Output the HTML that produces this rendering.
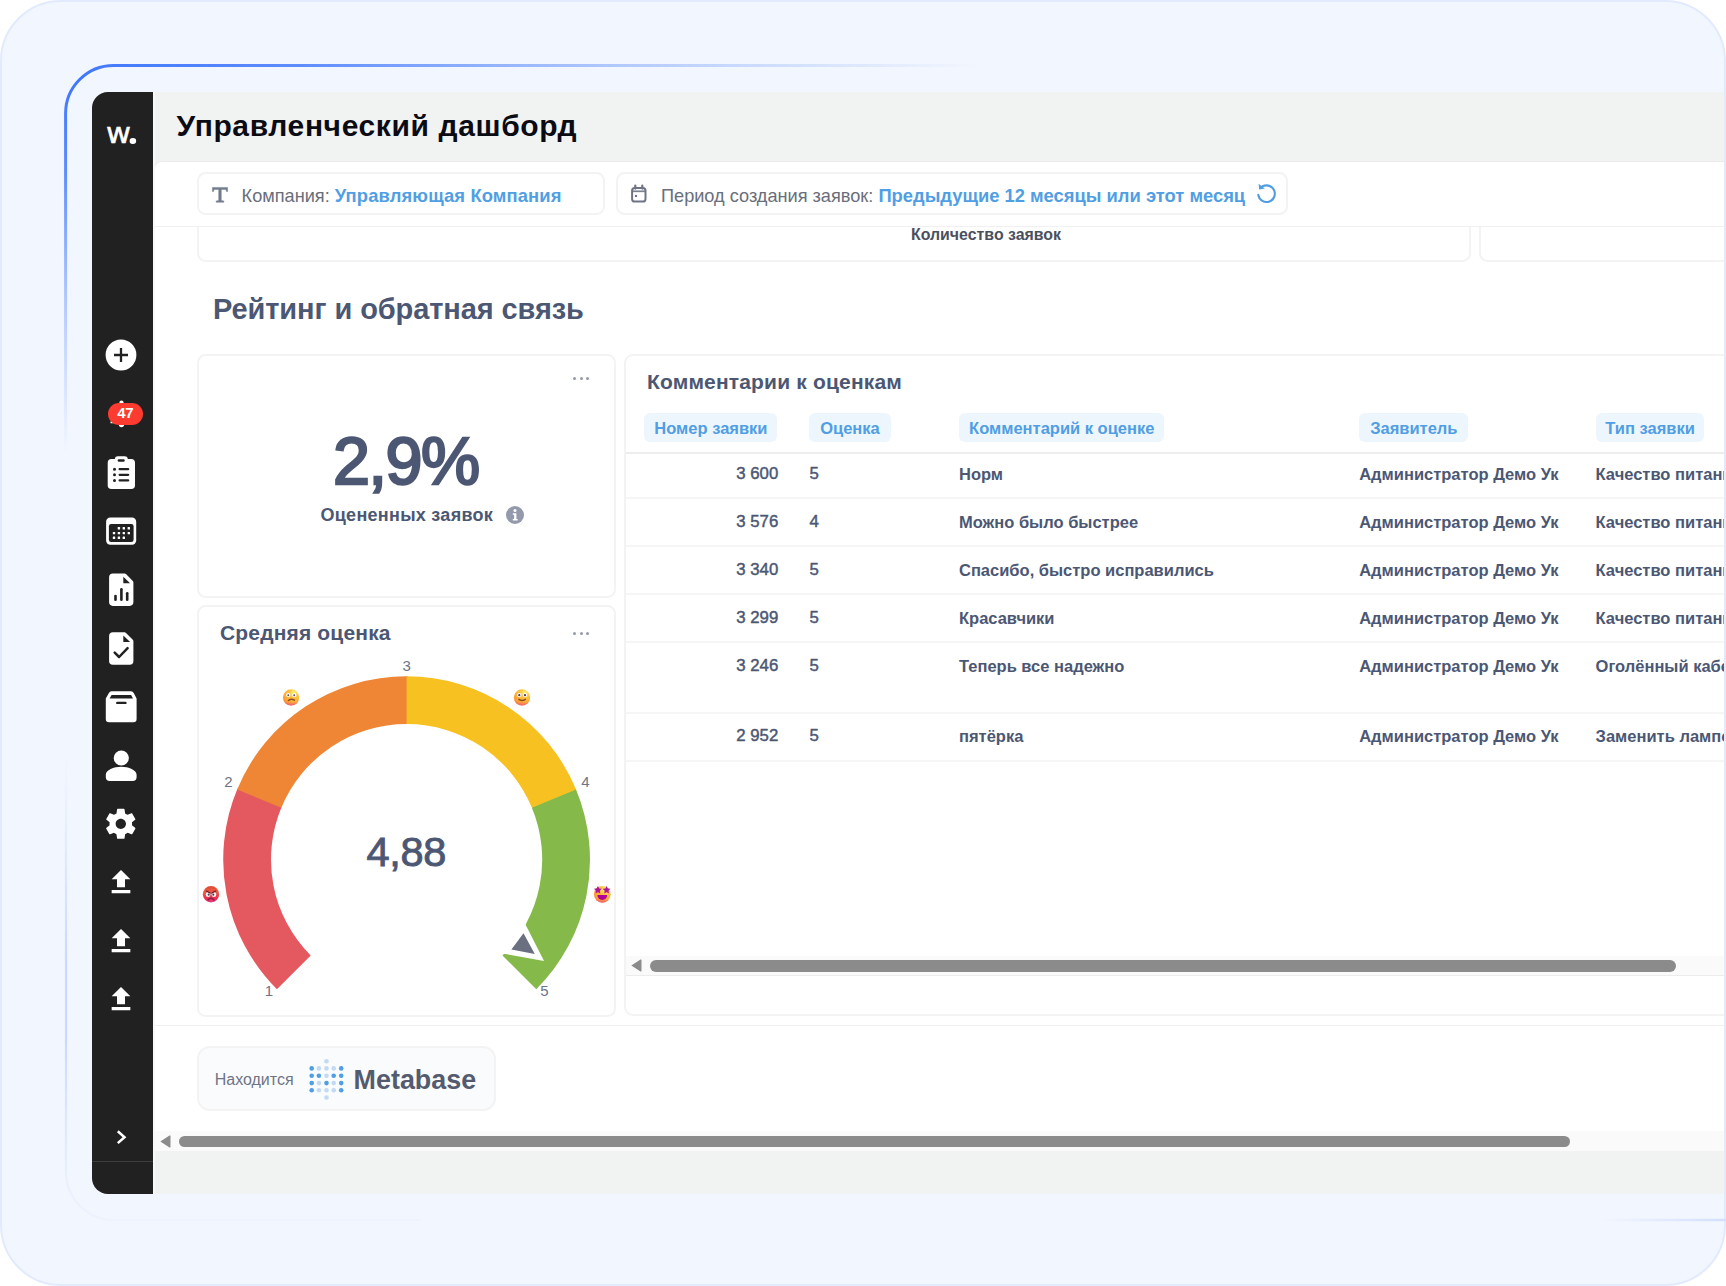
<!DOCTYPE html>
<html lang="ru">
<head>
<meta charset="utf-8">
<title>Управленческий дашборд</title>
<style>
*{box-sizing:border-box;margin:0;padding:0}
html,body{width:1726px;height:1286px;overflow:hidden;background:#fff;font-family:"Liberation Sans",sans-serif}
#outer{position:absolute;left:0;top:0;width:1726px;height:1286px;border:2px solid #e2eafd;border-radius:61px;background:#f2f6fe;overflow:hidden}
#frame{position:absolute;left:0;top:0;width:1726px;height:1286px;pointer-events:none}
#app{position:absolute;left:92px;top:92px;width:1632px;height:1102px;background:#f1f2f2;border-radius:16px 0 0 16px;overflow:hidden}
#side{position:absolute;left:0;top:0;width:61.5px;height:1102px;background:#212121}
#side .logo{position:absolute;left:14.4px;top:24.4px;color:#fff;font-family:"DejaVu Sans","Liberation Sans",sans-serif;font-size:28.4px;line-height:36px;-webkit-text-stroke:.5px #fff;white-space:nowrap;transform:scaleX(1.075);transform-origin:0 0}
#side .logo span{display:inline-block;width:5.6px;height:5.6px;border-radius:50%;background:#fff;color:#fff;font-size:5px;line-height:5.6px;overflow:hidden;-webkit-text-stroke:0;margin-left:-.9px;vertical-align:baseline;position:relative;top:.3px}
#side svg{position:absolute;fill:#fff}
#side .sep{position:absolute;left:0;top:1069px;width:61px;height:1px;background:#3d3d3d}
.badge{position:absolute;left:15.7px;top:311px;width:35.2px;height:22.2px;border-radius:11.1px;background:#fd3b30;color:#fff;font-size:15px;font-weight:bold;text-align:center;line-height:19.6px;letter-spacing:-.2px}
#title{position:absolute;left:84.5px;top:13.6px;font-size:30px;letter-spacing:.62px;font-weight:bold;color:#0b0b14;white-space:nowrap;line-height:40px}
#main{position:absolute;left:62.6px;top:69.6px;width:1569.4px;height:989.9px;background:#fff;border-radius:7px 0 0 0;overflow:hidden;box-shadow:0 -1px 0 #ebebeb}
.abs{position:absolute;white-space:nowrap}
.card{position:absolute;background:#fff;border:2px solid #f3f3f3;border-radius:8.5px}
.pill{position:absolute;top:10.9px;height:43px;border:2px solid #f3f3f3;border-radius:8.5px;background:#fff;white-space:nowrap;font-size:18.17px;line-height:39px;color:#696e7b}
.pill b{color:#509ee3;font-size:18.38px}
.pill svg{position:absolute}
.dark{color:#4c5773}
.hline{position:absolute;height:1.5px;background:#f0f0f0}
.th{position:absolute;top:0;height:29.5px;border-radius:6px;background:#eef6fd;color:#509ee3;font-weight:bold;font-size:16.5px;line-height:30px;white-space:nowrap;text-align:center}
.td{position:absolute;font-weight:bold;font-size:16.5px;color:#4c5773;white-space:nowrap;line-height:20px}
.td.lt{font-weight:normal;-webkit-text-stroke:.45px #4c5773;font-size:16.8px}
.dots{position:absolute;width:17px;height:4px}
.dots i{position:absolute;top:0;width:3px;height:3px;border-radius:50%;background:#949aab}
.glab{font-size:15px;fill:#6e7486;font-family:"Liberation Sans",sans-serif}
</style>
</head>
<body>
<div id="outer"></div>
<svg id="frame" viewBox="0 0 1726 1286"><defs><radialGradient id="g1" gradientUnits="userSpaceOnUse" cx="0" cy="0" r="1" gradientTransform="translate(80 80) scale(900 372)"><stop offset="0" stop-color="#3f76fb"/><stop offset="0.25" stop-color="#4a7efb" stop-opacity=".88"/><stop offset="0.6" stop-color="#5a8bfb" stop-opacity=".42"/><stop offset="1" stop-color="#6a98fb" stop-opacity="0"/></radialGradient><linearGradient id="g2" gradientUnits="userSpaceOnUse" x1="0" y1="757" x2="0" y2="1220"><stop offset="0" stop-color="#c5d6fb" stop-opacity="0"/><stop offset="0.2" stop-color="#c5d6fb" stop-opacity=".35"/><stop offset="0.44" stop-color="#c5d6fb" stop-opacity=".9"/><stop offset="0.61" stop-color="#c5d6fb" stop-opacity=".9"/><stop offset="0.78" stop-color="#c5d6fb" stop-opacity=".45"/><stop offset="0.9" stop-color="#c5d6fb" stop-opacity=".22"/><stop offset="1" stop-color="#c5d6fb" stop-opacity=".1"/></linearGradient><linearGradient id="g3" gradientUnits="userSpaceOnUse" x1="1600" y1="0" x2="1726" y2="0"><stop offset="0" stop-color="#d3dffc" stop-opacity="0"/><stop offset="1" stop-color="#d3dffc" stop-opacity="1"/></linearGradient></defs><path d="M1800 65.400H113.600a48 48 0 0 0-48 48V1172a48 48 0 0 0 48 48H1800" fill="none" stroke="url(#g1)" stroke-width="3"/><path d="M66 750V1172a48 48 0 0 0 48 48H420" fill="none" stroke="url(#g2)" stroke-width="2.200"/><path d="M1600 1220H1726" fill="none" stroke="url(#g3)" stroke-width="2.400"/></svg>
<div id="app">
<div id="side"><div class="logo">w<span>.</span></div><svg style="left:8px;top:243px" width="42" height="40" viewBox="100 335 42 40"><circle cx="121" cy="355" r="15.400"/><path d="M114 355h14M121 348v14" stroke="#212121" stroke-width="2.300" fill="none"/></svg><svg style="left:12.50px;top:305.00px" width="33" height="33" viewBox="0 0 24 24"><path d="M12 22c1.1 0 2-.9 2-2h-4c0 1.1.89 2 2 2zm6-6v-5c0-3.07-1.64-5.64-4.5-6.32V4c0-.83-.67-1.5-1.5-1.5s-1.5.67-1.5 1.5v.68C7.63 5.36 6 7.92 6 11v5l-2 2v1h16v-1l-2-2z"/></svg><div class="badge">47</div><svg style="left:8px;top:358px" width="42" height="45" viewBox="100 450 42 45"><rect x="107.700" y="459.100" width="27.300" height="29.900" rx="3.800"/><rect x="114.800" y="456.300" width="13" height="8" rx="3.200"/><g fill="#212121"><rect x="117.700" y="459.300" width="7" height="2.400" rx="1.200"/><circle cx="114.500" cy="469.2" r="1.500"/><rect x="118.500" y="468.05" width="10.800" height="2.300" rx="1.150"/><circle cx="114.500" cy="474.8" r="1.500"/><rect x="118.500" y="473.65" width="10.800" height="2.300" rx="1.150"/><circle cx="114.500" cy="480.4" r="1.500"/><rect x="118.500" y="479.25" width="10.800" height="2.300" rx="1.150"/></g></svg><svg style="left:8px;top:418px" width="42" height="40" viewBox="100 510 42 40"><rect x="106.100" y="517.500" width="30.100" height="27.300" rx="4.200"/><rect x="108.900" y="524" width="24.700" height="18" rx="2.300" fill="#212121"/><rect x="117.70" y="527.00" width="2.400" height="2.400" rx=".5"/><rect x="122.60" y="527.00" width="2.400" height="2.400" rx=".5"/><rect x="127.60" y="527.00" width="2.400" height="2.400" rx=".5"/><rect x="112.80" y="531.90" width="2.400" height="2.400" rx=".5"/><rect x="117.70" y="531.90" width="2.400" height="2.400" rx=".5"/><rect x="122.60" y="531.90" width="2.400" height="2.400" rx=".5"/><rect x="127.60" y="531.90" width="2.400" height="2.400" rx=".5"/><rect x="112.80" y="536.60" width="2.400" height="2.400" rx=".5"/><rect x="117.70" y="536.60" width="2.400" height="2.400" rx=".5"/><rect x="122.60" y="536.60" width="2.400" height="2.400" rx=".5"/></svg><svg style="left:8px;top:476px" width="42" height="44" viewBox="100 568 42 44"><path d="M112.89999999999999 573.5H124.6a2 2 0 0 1 1.400 .600L132.8 580.9a2 2 0 0 1 .600 1.400V602.1a3.800 3.800 0 0 1-3.800 3.800H112.89999999999999a3.800 3.800 0 0 1-3.800-3.800V577.3a3.800 3.800 0 0 1 3.800-3.800z"/><path d="M123.300 576.8V583.2H130.100z" fill="#212121"/><g fill="#212121"><rect x="114.200" y="594.700" width="2.600" height="6.300" rx="1.300"/><rect x="120.100" y="588" width="2.600" height="13" rx="1.300"/><rect x="125.900" y="591.900" width="2.600" height="9.100" rx="1.300"/></g></svg><svg style="left:8px;top:535px" width="42" height="44" viewBox="100 627 42 44"><path d="M112.89999999999999 632.3H124.6a2 2 0 0 1 1.400 .600L132.8 639.6999999999999a2 2 0 0 1 .600 1.400V660.9a3.800 3.800 0 0 1-3.800 3.800H112.89999999999999a3.800 3.800 0 0 1-3.800-3.800V636.0999999999999a3.800 3.800 0 0 1 3.800-3.800z"/><path d="M123.300 635.5999999999999V642.0H130.100z" fill="#212121"/><path d="M114.700 652.600L119.100 657L127.600 648.200" fill="none" stroke="#212121" stroke-width="2.500" stroke-linecap="round" stroke-linejoin="round"/></svg><svg style="left:8px;top:594px" width="42" height="42" viewBox="100 686 42 42"><path d="M111.600 691.200H131a3 3 0 0 1 2.700 1.700L136.600 698.600V719a3.200 3.200 0 0 1-3.200 3.200H109a3.200 3.200 0 0 1-3.200-3.200V698.600L108.900 692.900A3 3 0 0 1 111.600 691.200z"/><g fill="#212121"><path d="M111.600 694.900H131.100L133 698.500H109.600z"/><rect x="116.100" y="701.700" width="10.500" height="2.400" rx="1.200"/></g></svg><svg style="left:8px;top:653px" width="42" height="42" viewBox="100 745 42 42"><circle cx="121.300" cy="758" r="7.600"/><path d="M121.200 766.800c-7.500 0-15.400 3.300-15.400 8v2.200a4 4 0 0 0 4 4h22.800a4 4 0 0 0 4-4v-2.200c0-4.700-7.900-8-15.400-8z"/></svg><svg style="left:10.40px;top:713.10px" width="37.6" height="37.6" viewBox="0 0 24 24"><path d="M19.140 12.940c.040-.3.060-.61.060-.94 0-.32-.02-.64-.07-.94l2.030-1.580c.18-.14.23-.41.120-.61l-1.920-3.320c-.12-.22-.37-.29-.59-.22l-2.390.96c-.5-.38-1.030-.7-1.620-.94l-.36-2.540c-.04-.24-.24-.41-.48-.41h-3.840c-.24 0-.43.170-.47.410l-.36 2.540c-.59.240-1.130.57-1.620.94l-2.390-.96c-.22-.08-.47 0-.59.220L2.740 8.870c-.12.210-.08.470.120.610l2.030 1.580c-.05.300-.09.630-.09.940s.02.640.07.940l-2.030 1.580c-.18.140-.23.410-.12.610l1.920 3.320c.12.220.37.290.59.220l2.390-.96c.5.380 1.030.7 1.620.94l.36 2.540c.05.240.24.410.48.410h3.840c.24 0 .44-.17.470-.41l.36-2.540c.59-.24 1.130-.56 1.620-.94l2.390.96c.22.080.47 0 .59-.22l1.920-3.320c.12-.22.070-.47-.12-.61l-2.010-1.580zM12 15.300c-1.820 0-3.300-1.480-3.300-3.300s1.480-3.300 3.300-3.300 3.300 1.480 3.300 3.300-1.480 3.300-3.300 3.300z"/></svg><svg style="left:13.30px;top:774.20px" width="32" height="32" viewBox="0 0 24 24"><path d="M9 16h6v-6h4l-7-7-7 7h4zm-4 2h14v2.400H5z"/></svg><svg style="left:13.30px;top:832.60px" width="32" height="32" viewBox="0 0 24 24"><path d="M9 16h6v-6h4l-7-7-7 7h4zm-4 2h14v2.400H5z"/></svg><svg style="left:13.30px;top:890.90px" width="32" height="32" viewBox="0 0 24 24"><path d="M9 16h6v-6h4l-7-7-7 7h4zm-4 2h14v2.400H5z"/></svg><svg style="left:18px;top:1033px" width="24" height="25" viewBox="110 1125 24 25"><path d="M117.800 1131.300L124.500 1137.200L117.800 1143.100" fill="none" stroke="#fff" stroke-width="2.500"/></svg><div class="sep"></div></div>
<div style="position:absolute;left:61.300px;top:0;width:1.600px;height:1102px;background:#f8f8f8"></div>
<div id="title">Управленческий дашборд</div>
<div id="main"><div class="hline" style="left:0;top:64.4px;width:1570px"></div><div class="card" style="left:42.30000000000001px;top:38.400000000000006px;width:1274.400px;height:62px"></div><div class="card" style="left:1324.6000000000001px;top:38.400000000000006px;width:300px;height:62px"></div><div class="abs" style="left:0;top:0;width:1570px;height:64.4px;background:#fff"></div><div class="hline" style="left:0;top:64.4px;width:1570px"></div><div class="abs dark" id="kz" style="left:756.4px;top:64.4px;font-size:15.9px;font-weight:bold;line-height:18px;color:#4a4f5e">Количество заявок</div><div class="pill" style="left:42.30000000000001px;width:408.300px"><svg style="left:11.200px;top:10.900px" width="20" height="20" viewBox="210 185.800 20 20"><path d="M212.400 188.200H227.600V192.300H226.500L225.900 190.200H221.300V201.200L223.800 201.700V203.100H216.200V201.700L218.700 201.200V190.200H214.100L213.500 192.300H212.400Z" fill="#737a8c" stroke="#737a8c" stroke-width=".45" stroke-linejoin="round"/></svg><span style="position:absolute;left:42.700px;top:1.250px">Компания: <b style="letter-spacing:.13px">Управляющая Компания</b></span></div><div class="pill" style="left:461.29999999999995px;width:672.500px"><svg style="left:10px;top:9px" width="22" height="22" viewBox="628 184 22 22"><rect x="632.100" y="189" width="13.400" height="13.500" rx="2.600" fill="none" stroke="#6e7486" stroke-width="2"/><path d="M632 192.300h13.600" stroke="#6e7486" stroke-width="1.700" opacity=".9"/><path d="M635.300 186.600v3M642.300 186.600v3" stroke="#6e7486" stroke-width="2.200" stroke-linecap="round"/><circle cx="636" cy="196.900" r="1.200" fill="#6e7486"/></svg><span style="position:absolute;left:43.100px;top:1.250px">Период создания заявок: <b>Предыдущие 12 месяцы или этот месяц</b></span><svg style="left:635.800px;top:6.200px" width="24" height="24" viewBox="0 0 24 24"><path d="M6.300 7.200A8.300 8.300 0 1 1 4.300 13.900" fill="none" stroke="#509ee3" stroke-width="2.100" stroke-linecap="round"/><path d="M4.600 2.800l.6 5.800 5.600-1.200z" fill="#509ee3"/></svg></div><div class="abs dark" id="h2" style="left:58.400000000000006px;top:129.00000000000003px;font-size:29px;font-weight:bold;line-height:36px;letter-spacing:-.1px">Рейтинг и обратная связь</div><div class="card" style="left:42.30000000000001px;top:192.29999999999998px;width:419.300px;height:244.100px"></div><div class="dots" style="left:418.9px;top:215.1px"><i style="left:0"></i><i style="left:6.500px"></i><i style="left:13px"></i></div><div class="abs dark" id="big" style="left:41.70000000000002px;width:419px;text-align:center;top:261.70000000000005px;font-size:66.500px;font-weight:normal;-webkit-text-stroke:2.400px #4c5773;line-height:76px;letter-spacing:-1.500px">2,9%</div><div class="abs dark" id="sub" style="left:165.9px;top:342.4px;font-size:18px;font-weight:bold;line-height:22px;letter-spacing:.28px">Оцененных заявок</div><svg class="abs" style="left:351.29999999999995px;top:344.5px" width="18" height="18" viewBox="0 0 18 18"><circle cx="9" cy="9" r="9" fill="#949aab"/><circle cx="9" cy="4.600" r="1.500" fill="#fff"/><path d="M6.800 7.300h3.600v5.600h1.200v1.500H6.800v-1.500h1.300V8.800H6.800z" fill="#fff"/></svg><div class="card" style="left:42.30000000000001px;top:443.4px;width:419.300px;height:411.700px"></div><div class="abs dark" id="gt" style="left:65.4px;top:459.5px;font-size:21px;font-weight:bold;line-height:24px;letter-spacing:.17px">Средняя оценка</div><div class="dots" style="left:418.9px;top:470.4px"><i style="left:0"></i><i style="left:6.500px"></i><i style="left:13px"></i></div><svg class="abs" style="left:43.400000000000006px;top:478.4px" width="417" height="376" viewBox="198 640 417 376"><path d="M276.92 989.28A183.4 183.4 0 0 1 237.53 788.53L281.60 807.05A135.6 135.6 0 0 0 310.72 955.48Z" fill="#e4595f"/><path d="M237.16 789.42A183.4 183.4 0 0 1 407.56 676.20L407.31 724.00A135.6 135.6 0 0 0 281.32 807.71Z" fill="#ee8636"/><path d="M406.60 676.20A183.4 183.4 0 0 1 576.40 790.30L532.15 808.36A135.6 135.6 0 0 0 406.60 724.00Z" fill="#f7c221"/><path d="M576.04 789.42A183.4 183.4 0 0 1 536.28 989.28L502.48 955.48A135.6 135.6 0 0 0 531.88 807.71Z" fill="#85ba4b"/><polygon points="525,923.500 502.600,953.500 544,961" fill="#fff"/><polygon points="523.500,933.300 511.400,949.600 534.800,954" fill="#6b7080"/><text class="glab" x="406.600" y="671" text-anchor="middle">3</text><text class="glab" x="228.500" y="786.500" text-anchor="middle">2</text><text class="glab" x="585.300" y="786.500" text-anchor="middle">4</text><text class="glab" x="269" y="996" text-anchor="middle">1</text><text class="glab" x="544.500" y="996" text-anchor="middle">5</text><text x="406.200" y="865.600" text-anchor="middle" font-size="41.500" fill="#4c5773" stroke="#4c5773" stroke-width=".9" letter-spacing="-0.3" font-family="Liberation Sans, sans-serif">4,88</text><defs><radialGradient id="ey" cx=".68" cy=".22" r=".95"><stop offset="0" stop-color="#fff27a"/><stop offset=".3" stop-color="#fec542"/><stop offset=".7" stop-color="#fba236"/><stop offset="1" stop-color="#ee6f45"/></radialGradient><linearGradient id="epk" x1="0" y1="0" x2="0" y2="1"><stop offset=".78" stop-color="#f0508a" stop-opacity="0"/><stop offset="1" stop-color="#f0508a" stop-opacity=".75"/></linearGradient><linearGradient id="er" x1="0" y1="0" x2="0" y2="1"><stop offset="0" stop-color="#df4b2e"/><stop offset=".4" stop-color="#ee5a48"/><stop offset=".75" stop-color="#ea2d4c"/><stop offset="1" stop-color="#e83c8a"/></linearGradient><linearGradient id="est" x1="0" y1="0" x2="0" y2="1"><stop offset="0" stop-color="#9212ac"/><stop offset="1" stop-color="#c01a8c"/></linearGradient></defs><g transform="translate(211 894.3)"><circle r="8.200" fill="url(#er)"/><ellipse cx="-2.900" cy=".1" rx="2.300" ry="2.500" fill="#fff"/><ellipse cx="2.900" cy=".1" rx="2.300" ry="2.500" fill="#fff"/><circle cx="-2.300" cy=".4" r="1.100" fill="#4a4058"/><circle cx="2.300" cy=".4" r="1.100" fill="#4a4058"/><path d="M-5.200-3.600L-.8-.9L-.8-2.900L-4.600-4.600zM5.200-3.600L.8-.9L.8-2.900L4.600-4.600z" fill="#e8503e"/><path d="M-4.600-3.300L-1-1.300M4.600-3.300L1-1.300" stroke="#5a2030" stroke-width="1.100" stroke-linecap="round"/><path d="M-3 5.600Q0 2.400 3 5.600" stroke="#8a1f48" stroke-width="1.500" fill="none" stroke-linecap="round"/></g><g transform="translate(291.1 697.4)"><circle r="8.150" fill="url(#ey)"/><circle r="8.150" fill="url(#epk)"/><circle cx="-2.900" cy="-2.300" r="2.150" fill="#fff"/><circle cx="3.100" cy="-2.300" r="2.150" fill="#fff"/><circle cx="-2.800" cy="-2.100" r=".95" fill="#5a4a66"/><circle cx="3.100" cy="-2.100" r=".95" fill="#5a4a66"/><path d="M-2.700 3.100Q.4 .9 3.300 2.700" stroke="#8a4a22" stroke-width="1.500" fill="none" stroke-linecap="round"/></g><g transform="translate(522 697.4)"><circle r="8.150" fill="url(#ey)"/><circle r="8.150" fill="url(#epk)"/><circle cx="-2.800" cy="-2.300" r="2.150" fill="#fff"/><circle cx="3" cy="-2.300" r="2.150" fill="#fff"/><circle cx="-2.700" cy="-2.200" r="1.100" fill="#4a3560"/><circle cx="3" cy="-2.200" r="1.100" fill="#4a3560"/><path d="M-3 1.900Q0 4.200 3.300 1.900" stroke="#8a4f1e" stroke-width="1.600" fill="none" stroke-linecap="round"/></g><g transform="translate(602.3 894.3)"><circle r="8.400" fill="url(#ey)"/><circle r="8.400" fill="url(#epk)"/><polygon points="-4.40,-8.30 -3.17,-5.90 -0.50,-5.47 -2.40,-3.55 -1.99,-0.88 -4.40,-2.10 -6.81,-0.88 -6.40,-3.55 -8.30,-5.47 -5.63,-5.90" fill="url(#est)"/><polygon points="4.30,-8.30 5.53,-5.90 8.20,-5.47 6.30,-3.55 6.71,-0.88 4.30,-2.10 1.89,-0.88 2.30,-3.55 0.40,-5.47 3.07,-5.90" fill="url(#est)"/><path d="M-4.900 .7H4.900A4.900 4.900 0 0 1-4.900 .7z" fill="#b4009a"/></g></svg><div class="card" style="left:469.9px;top:192.4px;width:1120px;height:662.500px;border-radius:9px 0 0 9px"></div><div class="abs dark" style="left:492.4px;top:208.50000000000003px;font-size:21px;font-weight:bold;line-height:24px;letter-spacing:.17px" id="ttitle">Комментарии к оценкам</div><div class="th" style="left:489.9px;top:251.4px;width:132.9px"><span>Номер заявки</span></div><div class="th" style="left:654.8px;top:251.4px;width:81.2px"><span>Оценка</span></div><div class="th" style="left:804.5px;top:251.4px;width:205.3px"><span>Комментарий к оценке</span></div><div class="th" style="left:1204.8px;top:251.4px;width:108.9px"><span>Заявитель</span></div><div class="th" style="left:1441.3px;top:251.4px;width:108.4px"><span>Тип заявки</span></div><div class="hline" style="left:471.4px;top:290.1px;width:1110px;height:2px;background:#ededed"></div><div class="td num lt" style="left:523.6999999999999px;top:302.6px;width:100px;text-align:right">3 600</div><div class="td lt" style="left:655.0px;top:302.6px">5</div><div class="td c3" style="left:804.4px;top:302.6px">Норм</div><div class="td c4" style="left:1204.6000000000001px;top:302.6px">Администратор Демо Ук</div><div class="td c5" style="left:1441.0px;top:302.6px">Качество питания</div><div class="td num lt" style="left:523.6999999999999px;top:350.8px;width:100px;text-align:right">3 576</div><div class="td lt" style="left:655.0px;top:350.8px">4</div><div class="td c3" style="left:804.4px;top:350.8px">Можно было быстрее</div><div class="td c4" style="left:1204.6000000000001px;top:350.8px">Администратор Демо Ук</div><div class="td c5" style="left:1441.0px;top:350.8px">Качество питания</div><div class="td num lt" style="left:523.6999999999999px;top:398.6px;width:100px;text-align:right">3 340</div><div class="td lt" style="left:655.0px;top:398.6px">5</div><div class="td c3" style="left:804.4px;top:398.6px">Спасибо, быстро исправились</div><div class="td c4" style="left:1204.6000000000001px;top:398.6px">Администратор Демо Ук</div><div class="td c5" style="left:1441.0px;top:398.6px">Качество питания</div><div class="td num lt" style="left:523.6999999999999px;top:446.8px;width:100px;text-align:right">3 299</div><div class="td lt" style="left:655.0px;top:446.8px">5</div><div class="td c3" style="left:804.4px;top:446.8px">Красавчики</div><div class="td c4" style="left:1204.6000000000001px;top:446.8px">Администратор Демо Ук</div><div class="td c5" style="left:1441.0px;top:446.8px">Качество питания</div><div class="td num lt" style="left:523.6999999999999px;top:494.7px;width:100px;text-align:right">3 246</div><div class="td lt" style="left:655.0px;top:494.7px">5</div><div class="td c3" style="left:804.4px;top:494.7px">Теперь все надежно</div><div class="td c4" style="left:1204.6000000000001px;top:494.7px">Администратор Демо Ук</div><div class="td c5" style="left:1441.0px;top:494.7px">Оголённый кабель</div><div class="td num lt" style="left:523.6999999999999px;top:564.8px;width:100px;text-align:right">2 952</div><div class="td lt" style="left:655.0px;top:564.8px">5</div><div class="td c3" style="left:804.4px;top:564.8px">пятёрка</div><div class="td c4" style="left:1204.6000000000001px;top:564.8px">Администратор Демо Ук</div><div class="td c5" style="left:1441.0px;top:564.8px">Заменить лампочку</div><div class="hline" style="left:471.4px;top:335.4px;width:1110px;height:2px;background:#f6f6f6"></div><div class="hline" style="left:471.4px;top:383.4px;width:1110px;height:2px;background:#f6f6f6"></div><div class="hline" style="left:471.4px;top:431.4px;width:1110px;height:2px;background:#f6f6f6"></div><div class="hline" style="left:471.4px;top:479.4px;width:1110px;height:2px;background:#f6f6f6"></div><div class="hline" style="left:471.4px;top:550.4px;width:1110px;height:2px;background:#f6f6f6"></div><div class="hline" style="left:471.4px;top:598.4px;width:1110px;height:2px;background:#f6f6f6"></div><div class="abs" style="left:471.4px;top:794.0px;width:1110px;height:20.400px;background:#fafafa;border-bottom:1.500px solid #ececec"></div><div class="abs" style="left:495.0px;top:798.4px;width:1026.9px;height:11.600px;border-radius:6px;background:#8b8b8b"></div><svg class="abs" style="left:476.4px;top:797.9px" width="11" height="13" viewBox="0 0 11 13"><path d="M0.300 6.500L9.500 .6a.6.6 0 0 1 1 .5v10.800a.6.6 0 0 1-1 .5z" fill="#8b8b8b"/></svg><div class="hline" style="left:0;top:863.4px;width:1570px"></div><div class="card" style="left:42.900000000000006px;top:884.4px;width:298.500px;height:65px;border-radius:13px;background:#fafbfc"></div><div class="abs" id="nah" style="left:60.099999999999994px;top:908.1px;font-size:16px;line-height:20px;color:#6e7486">Находится</div><svg class="abs" style="left:145.4px;top:888.4px" width="60" height="60" viewBox="300 1050 60 60"><circle cx="326.5" cy="1061.2" r="2.300" fill="#c3daf4"/><circle cx="326.5" cy="1097.5" r="2.300" fill="#c3daf4"/><circle cx="311.7" cy="1068.4" r="2.300" fill="#509ee3"/><circle cx="318.9" cy="1068.4" r="2.300" fill="#c3daf4"/><circle cx="326.5" cy="1068.4" r="2.300" fill="#c3daf4"/><circle cx="333.7" cy="1068.4" r="2.300" fill="#c3daf4"/><circle cx="341.2" cy="1068.4" r="2.300" fill="#509ee3"/><circle cx="311.7" cy="1075.8" r="2.300" fill="#509ee3"/><circle cx="318.9" cy="1075.8" r="2.300" fill="#509ee3"/><circle cx="326.5" cy="1075.8" r="2.300" fill="#c3daf4"/><circle cx="333.7" cy="1075.8" r="2.300" fill="#509ee3"/><circle cx="341.2" cy="1075.8" r="2.300" fill="#509ee3"/><circle cx="311.7" cy="1083.1" r="2.300" fill="#509ee3"/><circle cx="318.9" cy="1083.1" r="2.300" fill="#c3daf4"/><circle cx="326.5" cy="1083.1" r="2.300" fill="#509ee3"/><circle cx="333.7" cy="1083.1" r="2.300" fill="#c3daf4"/><circle cx="341.2" cy="1083.1" r="2.300" fill="#509ee3"/><circle cx="311.7" cy="1090.3" r="2.300" fill="#509ee3"/><circle cx="318.9" cy="1090.3" r="2.300" fill="#c3daf4"/><circle cx="326.5" cy="1090.3" r="2.300" fill="#c3daf4"/><circle cx="333.7" cy="1090.3" r="2.300" fill="#c3daf4"/><circle cx="341.2" cy="1090.3" r="2.300" fill="#509ee3"/></svg><div class="abs" id="mb" style="left:199.00000000000003px;top:901.6px;font-size:26.900px;font-weight:bold;line-height:34px;color:#555b6f">Metabase</div><div class="abs" style="left:0;top:969.6999999999999px;width:1570px;height:21px;background:#fafafa;border-bottom:1px solid #ececec"></div><div class="abs" style="left:24.400000000000006px;top:974.1999999999999px;width:1391px;height:11.600px;border-radius:6px;background:#8b8b8b"></div><svg class="abs" style="left:5.400000000000006px;top:973.6999999999999px" width="11" height="13" viewBox="0 0 11 13"><path d="M0.300 6.500L9.500 .6a.6.6 0 0 1 1 .5v10.800a.6.6 0 0 1-1 .5z" fill="#8b8b8b"/></svg></div>
</div>
</body>
</html>
